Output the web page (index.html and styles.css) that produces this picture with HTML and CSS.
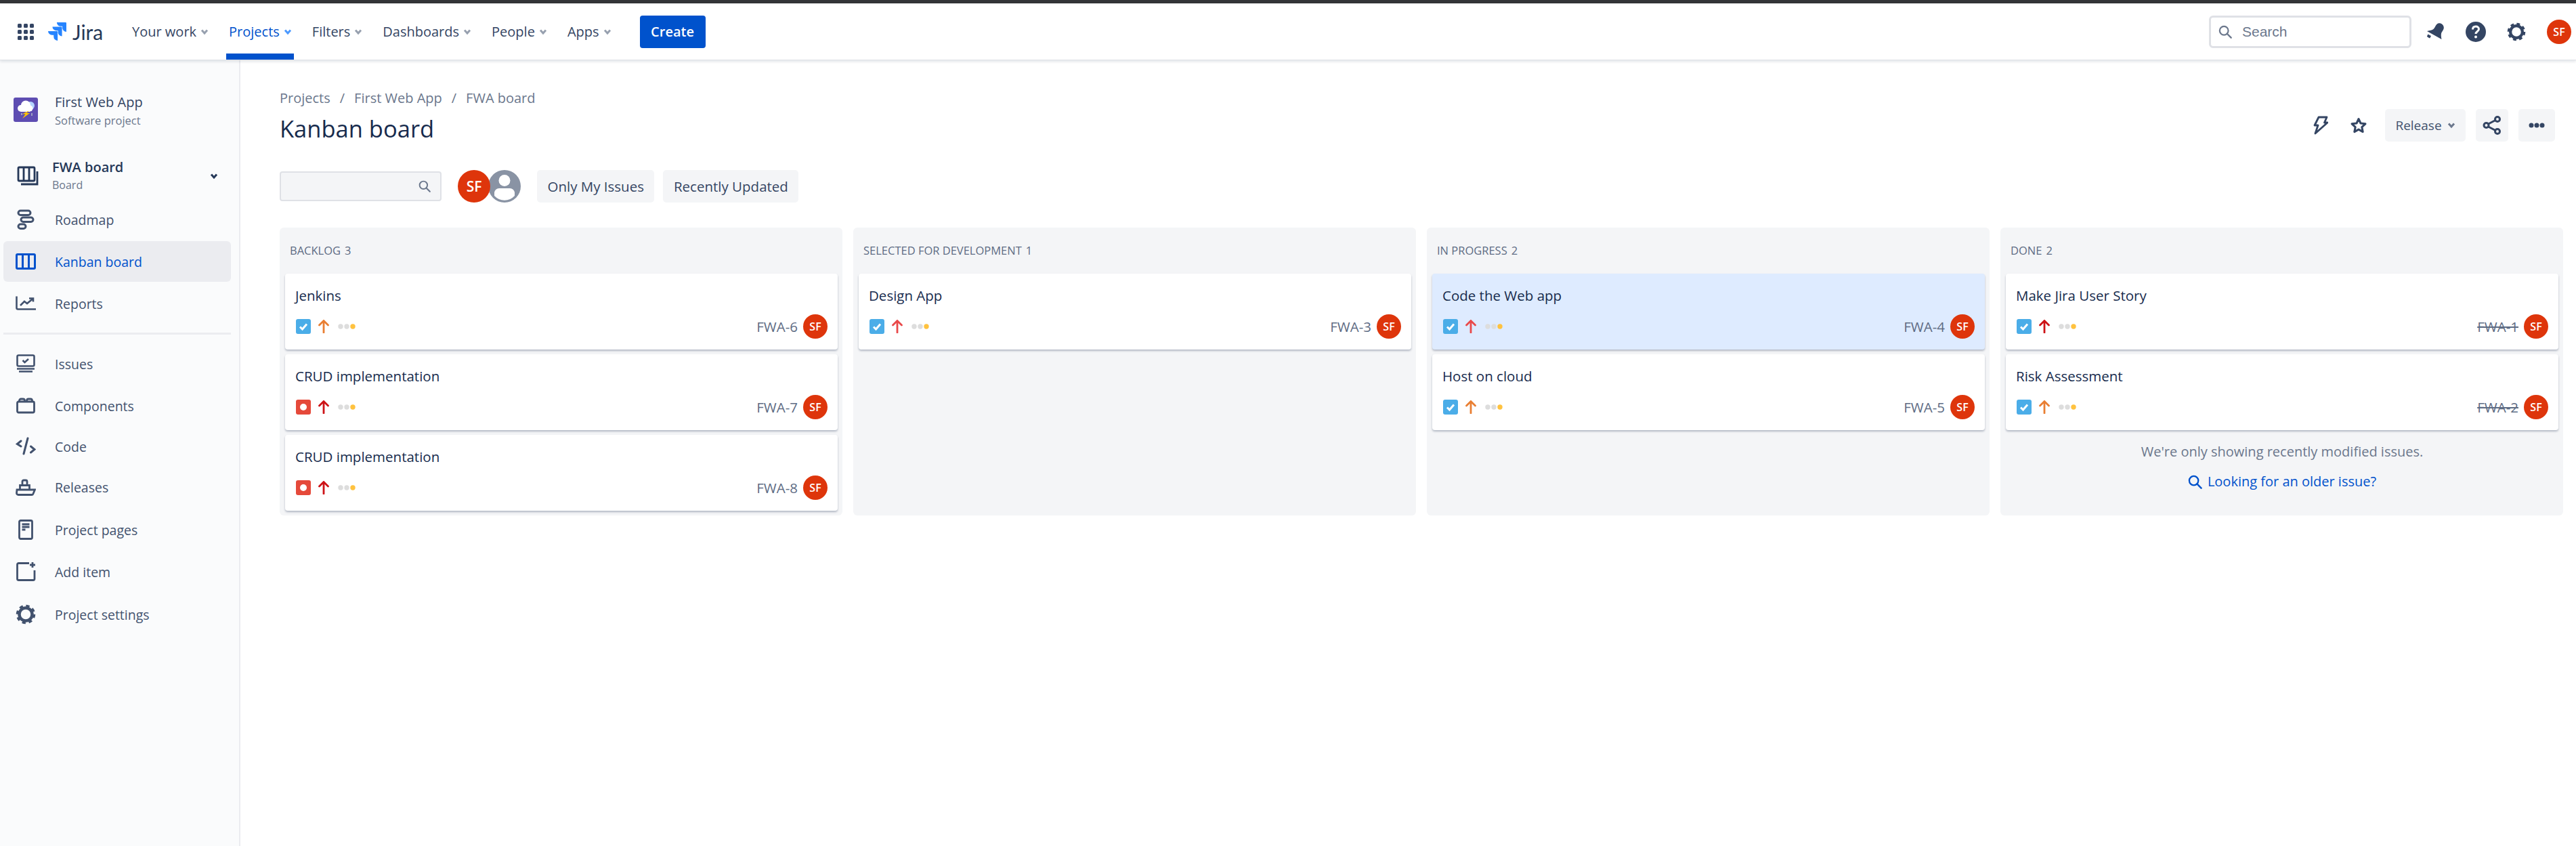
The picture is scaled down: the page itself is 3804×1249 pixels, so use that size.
FILE: index.html
```html
<!DOCTYPE html>
<html lang="en">
<head>
    <meta charset="UTF-8">
    <title>Kanban board - Jira</title>
    <link rel="stylesheet" href="styles.css">
</head>
<body>
    <!-- shared icons -->
    <svg class="defs" width="0" height="0">
        <symbol id="chev" viewBox="0 0 12 12"><path d="M2 3.500 6 8l4-4.500" fill="none" stroke="currentColor" stroke-width="3"/></symbol>
        <symbol id="task" viewBox="0 0 22 22"><rect width="22" height="22" rx="3" fill="#4bade8"/><path d="M6 11.500l3.500 3.500L16 7.500" fill="none" stroke="#fff" stroke-width="3"/></symbol>
        <symbol id="bug" viewBox="0 0 22 22"><rect width="22" height="22" rx="3" fill="#e5493a"/><circle cx="11" cy="11" r="5" fill="#fff"/></symbol>
        <symbol id="arrow" viewBox="0 0 16 20"><path d="M8 19V2M1.500 8 8 1.500 14.500 8" fill="none" stroke="currentColor" stroke-width="2.800" stroke-linecap="round"/></symbol>
        <symbol id="dots" viewBox="0 0 26 8"><circle cx="4" cy="4" r="3.700" fill="#ddd"/><circle cx="13" cy="4" r="3.700" fill="#ddd"/><circle cx="22" cy="4" r="3.700" fill="#ffc23f"/></symbol>
        <symbol id="gear" viewBox="0 0 30 30"><circle cx="15" cy="15" r="9.500" fill="none" stroke="currentColor" stroke-width="4.500"/><circle cx="15" cy="15" r="12.500" fill="none" stroke="currentColor" stroke-width="3.500" stroke-dasharray="5.200 4.620"/></symbol>
        <symbol id="lens" viewBox="0 0 22 22"><circle cx="9" cy="9" r="7" fill="none" stroke="currentColor" stroke-width="2.400"/><path d="M14 14l6.500 6.500" stroke="currentColor" stroke-width="2.600" stroke-linecap="round"/></symbol>
    </svg>

    <div class="topstrip"></div>

    <header class="topnav">
        <svg class="apps" width="24" height="24" viewBox="0 0 24 24" fill="#344563">
            <rect width="6" height="6" rx="1.500"/><rect x="9" width="6" height="6" rx="1.500"/><rect x="18" width="6" height="6" rx="1.500"/>
            <rect y="9" width="6" height="6" rx="1.500"/><rect x="9" y="9" width="6" height="6" rx="1.500"/><rect x="18" y="9" width="6" height="6" rx="1.500"/>
            <rect y="18" width="6" height="6" rx="1.500"/><rect x="9" y="18" width="6" height="6" rx="1.500"/><rect x="18" y="18" width="6" height="6" rx="1.500"/>
        </svg>
        <svg class="logo" width="27" height="27" viewBox="0 0 24 24" fill="#2684ff"><path d="M11.571 11.513H0a5.218 5.218 0 0 0 5.232 5.215h2.13v2.057A5.215 5.215 0 0 0 12.575 24V12.518a1.005 1.005 0 0 0-1.005-1.005zm5.723-5.756H5.736a5.215 5.215 0 0 0 5.215 5.214h2.129v2.058a5.218 5.218 0 0 0 5.215 5.214V6.758a1.001 1.001 0 0 0-1.001-1.001zM23.013 0H11.455a5.215 5.215 0 0 0 5.215 5.215h2.129v2.057A5.215 5.215 0 0 0 24 12.483V1.005A1.001 1.001 0 0 0 23.013 0Z"/></svg>
        <span class="brand">Jira</span>
        <nav class="menu">
            <a class="menu-item">Your work <svg width="12" height="12"><use href="#chev"/></svg></a>
            <a class="menu-item active">Projects <svg width="12" height="12"><use href="#chev"/></svg></a>
            <a class="menu-item">Filters <svg width="12" height="12"><use href="#chev"/></svg></a>
            <a class="menu-item">Dashboards <svg width="12" height="12"><use href="#chev"/></svg></a>
            <a class="menu-item">People <svg width="12" height="12"><use href="#chev"/></svg></a>
            <a class="menu-item">Apps <svg width="12" height="12"><use href="#chev"/></svg></a>
        </nav>
        <button class="create">Create</button>
        <div class="search">
            <svg width="20" height="20"><use href="#lens"/></svg>
            <span>Search</span>
        </div>
        <svg class="tool bell" width="28" height="28" viewBox="0 0 28 28" fill="#344563"><path d="M18.500 1.500c4-1 8 2 8.300 6 .2 3-1.800 4.800-3 7-1.200 2-1.300 5-.3 10.500L2 13c4-1 7.500-1 9.800-3.200C14 7.700 15 2.400 18.500 1.500z"/><path d="M3.500 17.500l4.500 2.600-1.800 3.300c-1.500-.3-3.600-1.500-4.300-2.800z"/></svg>
        <svg class="tool" width="30" height="30" viewBox="0 0 30 30"><circle cx="15" cy="15" r="15" fill="#344563"/><path d="M10.500 11.500c0-3 2-4.500 4.500-4.500s4.500 1.500 4.500 4c0 3.500-4.500 3.500-4.500 7" fill="none" stroke="#fff" stroke-width="3"/><circle cx="15" cy="22.500" r="2" fill="#fff"/></svg>
        <svg class="tool gear" width="28" height="28"><use href="#gear"/></svg>
        <span class="avatar nav-avatar">SF</span>
    </header>

    <div class="layout">
        <aside class="sidebar">
            <div class="project">
                <svg width="36" height="36" viewBox="0 0 36 36"><rect width="36" height="36" rx="3" fill="#5e4db2"/><circle cx="25" cy="12" r="6" fill="#b3d4ff"/><g fill="#fff"><circle cx="11" cy="16" r="5"/><circle cx="18" cy="11.500" r="7"/><circle cx="24" cy="16" r="4.500"/><rect x="11" y="15" width="13" height="6"/></g><path d="M21 20l-8 4.500h4.500L13 31l11-8h-5l3.500-3z" fill="#ffc400"/><path d="M12 23v3M27 23v4" stroke="#b3bac5" stroke-width="1.500"/></svg>
                <div>
                    <div class="project-name">First Web App</div>
                    <div class="project-type">Software project</div>
                </div>
            </div>
            <div class="board-pick">
                <svg width="32" height="30" viewBox="0 0 32 30" fill="none" stroke="#253858" stroke-width="2.800"><rect x="2" y="2" width="24" height="20" rx="1.500"/><path d="M10 2v20M18 2v20M6 27h24V8"/></svg>
                <div class="board-text">
                    <div class="board-name">FWA board</div>
                    <div class="board-type">Board</div>
                </div>
                <svg class="board-chev" width="12" height="12"><use href="#chev"/></svg>
            </div>
            <a class="side-item">
                <svg width="30" height="30" viewBox="0 0 30 30" fill="none" stroke="currentColor" stroke-width="3"><rect x="4" y="2" width="18" height="6.500" rx="3.250"/><rect x="8" y="12" width="18" height="6.500" rx="3.250"/><rect x="4" y="22" width="11" height="6.500" rx="3.250"/></svg>
                Roadmap
            </a>
            <a class="side-item current">
                <svg width="30" height="30" viewBox="0 0 30 30" fill="none" stroke="currentColor" stroke-width="3"><rect x="1.500" y="4.500" width="27" height="21" rx="1.500"/><path d="M10.500 4.500v21M19.500 4.500v21"/></svg>
                Kanban board
            </a>
            <a class="side-item">
                <svg width="30" height="30" viewBox="0 0 30 30" fill="none" stroke="currentColor" stroke-width="2.600"><path d="M1.500 4.500v17a2 2 0 0 0 2 2H30"/><path d="M7 18l6-6 4 3 8-6.500M20 7.500h6v5"/></svg>
                Reports
            </a>
            <div class="side-rule"></div>
            <a class="side-item">
                <svg width="30" height="30" viewBox="0 0 30 30" fill="none" stroke="currentColor" stroke-width="2.600"><rect x="2.500" y="2.500" width="25" height="16" rx="2"/><path d="M10.500 10l3 3 5.500-5"/><path d="M2 22.500h26M5 26.500h20"/></svg>
                Issues
            </a>
            <a class="side-item">
                <svg width="30" height="30" viewBox="0 0 30 30" fill="none" stroke="currentColor" stroke-width="2.800"><rect x="2.500" y="9" width="25" height="16" rx="2"/><path d="M5.500 9V7.500a2.500 2.500 0 0 1 2.500-2.500h3a2.500 2.500 0 0 1 2.500 2.500V9M16.500 9V7.500A2.500 2.500 0 0 1 19 5h3a2.500 2.500 0 0 1 2.500 2.500V9"/></svg>
                Components
            </a>
            <a class="side-item close">
                <svg width="30" height="30" viewBox="0 0 30 30" fill="none" stroke="currentColor" stroke-width="3" stroke-linecap="round"><path d="M8 7l-5.500 4.500L8 15M12 26l6-23M22.500 15l5.500 4.500-5.500 4.500"/></svg>
                Code
            </a>
            <a class="side-item close">
                <svg width="30" height="30" viewBox="0 0 30 30" fill="none" stroke="currentColor" stroke-width="2.800"><path d="M2 19h26.500l-2.500 6a2 2 0 0 1-2 1.500H4a2.500 2.500 0 0 1-2.500-2.500z"/><path d="M6.500 18v-5.500h14V18M10 12V7a2 2 0 0 1 2-2h3a2 2 0 0 1 2 2v5"/></svg>
                Releases
            </a>
            <a class="side-item spaced">
                <svg width="30" height="30" viewBox="0 0 30 30" fill="none" stroke="currentColor" stroke-width="2.800"><rect x="5.500" y="1.500" width="19" height="27" rx="2"/><path d="M9.500 7h11M9.500 11h11M9.500 15h5"/></svg>
                Project pages
            </a>
            <a class="side-item">
                <svg width="30" height="30" viewBox="0 0 30 30" fill="none" stroke="currentColor" stroke-width="2.800"><path d="M20 2.500H4.500a2 2 0 0 0-2 2v21a2 2 0 0 0 2 2H26a2 2 0 0 0 2-2V13"/><path d="M25 1v8M21 5h8"/></svg>
                Add item
            </a>
            <a class="side-item spaced">
                <svg width="30" height="30"><use href="#gear"/></svg>
                Project settings
            </a>
        </aside>

        <main class="content">
            <div class="page-head">
                <div>
                    <div class="crumbs"><span>Projects</span><i>/</i><span>First Web App</span><i>/</i><span>FWA board</span></div>
                    <h1>Kanban board</h1>
                </div>
                <div class="actions">
                    <svg class="act-icon" width="22" height="28" viewBox="0 0 22 28" fill="none" stroke="#344563" stroke-width="2.800" stroke-linejoin="round"><path d="M8 2h12l-3.500 8H21L3 26l4-12H2z"/></svg>
                    <svg class="act-icon star" width="26" height="24" viewBox="0 0 26 24" fill="none" stroke="#344563" stroke-width="3" stroke-linejoin="round"><path d="M13 2.500l3 6.500 7 .8-5.200 4.800 1.400 7L13 18.100l-6.200 3.500 1.400-7L3 9.800l7-.8z"/></svg>
                    <button class="act-btn release">Release <svg width="12" height="12"><use href="#chev"/></svg></button>
                    <button class="act-btn share">
                        <svg width="28" height="30" viewBox="0 0 28 30" fill="none" stroke="#344563" stroke-width="3"><circle cx="22" cy="6" r="3.500"/><circle cx="22" cy="24" r="3.500"/><circle cx="5.500" cy="15" r="3.500"/><path d="M8.500 13l10.500-5.500M8.500 17L19 22.500"/></svg>
                    </button>
                    <button class="act-btn more">
                        <svg width="24" height="8" viewBox="0 0 24 8" fill="#344563"><circle cx="4" cy="4" r="3.500"/><circle cx="12" cy="4" r="3.500"/><circle cx="20" cy="4" r="3.500"/></svg>
                    </button>
                </div>
            </div>

            <div class="toolbar">
                <div class="filter">
                    <svg width="18" height="18"><use href="#lens"/></svg>
                </div>
                <div class="people">
                    <span class="avatar big">SF</span>
                    <svg class="ghost" width="48" height="48" viewBox="0 0 48 48"><circle cx="24" cy="24" r="24" fill="#8993a4"/><circle cx="24" cy="15.500" r="8.500" fill="#fff"/><path d="M9 33a7 7 0 0 1 7-6h16a7 7 0 0 1 7 6v5a20 20 0 0 1-30 0z" fill="#fff"/></svg>
                </div>
                <button class="quick">Only My Issues</button>
                <button class="quick">Recently Updated</button>
            </div>

            <section class="board">
                <div class="column">
                    <h2>BACKLOG <b>3</b></h2>
                    <article class="card">
                        <p class="summary">Jenkins</p>
                        <div class="card-foot">
                            <svg width="22" height="22"><use href="#task"/></svg>
                            <svg class="prio orange" width="16" height="20"><use href="#arrow"/></svg>
                            <svg width="26" height="8"><use href="#dots"/></svg>
                            <span class="key">FWA-6</span><span class="avatar">SF</span>
                        </div>
                    </article>
                    <article class="card">
                        <p class="summary">CRUD implementation</p>
                        <div class="card-foot">
                            <svg width="22" height="22"><use href="#bug"/></svg>
                            <svg class="prio dark" width="16" height="20"><use href="#arrow"/></svg>
                            <svg width="26" height="8"><use href="#dots"/></svg>
                            <span class="key">FWA-7</span><span class="avatar">SF</span>
                        </div>
                    </article>
                    <article class="card">
                        <p class="summary">CRUD implementation</p>
                        <div class="card-foot">
                            <svg width="22" height="22"><use href="#bug"/></svg>
                            <svg class="prio dark" width="16" height="20"><use href="#arrow"/></svg>
                            <svg width="26" height="8"><use href="#dots"/></svg>
                            <span class="key">FWA-8</span><span class="avatar">SF</span>
                        </div>
                    </article>
                </div>

                <div class="column">
                    <h2>SELECTED FOR DEVELOPMENT <b>1</b></h2>
                    <article class="card">
                        <p class="summary">Design App</p>
                        <div class="card-foot">
                            <svg width="22" height="22"><use href="#task"/></svg>
                            <svg class="prio red" width="16" height="20"><use href="#arrow"/></svg>
                            <svg width="26" height="8"><use href="#dots"/></svg>
                            <span class="key">FWA-3</span><span class="avatar">SF</span>
                        </div>
                    </article>
                </div>

                <div class="column">
                    <h2>IN PROGRESS <b>2</b></h2>
                    <article class="card picked">
                        <p class="summary">Code the Web app</p>
                        <div class="card-foot">
                            <svg width="22" height="22"><use href="#task"/></svg>
                            <svg class="prio red" width="16" height="20"><use href="#arrow"/></svg>
                            <svg width="26" height="8"><use href="#dots"/></svg>
                            <span class="key">FWA-4</span><span class="avatar">SF</span>
                        </div>
                    </article>
                    <article class="card">
                        <p class="summary">Host on cloud</p>
                        <div class="card-foot">
                            <svg width="22" height="22"><use href="#task"/></svg>
                            <svg class="prio orange" width="16" height="20"><use href="#arrow"/></svg>
                            <svg width="26" height="8"><use href="#dots"/></svg>
                            <span class="key">FWA-5</span><span class="avatar">SF</span>
                        </div>
                    </article>
                </div>

                <div class="column">
                    <h2>DONE <b>2</b></h2>
                    <article class="card">
                        <p class="summary">Make Jira User Story</p>
                        <div class="card-foot">
                            <svg width="22" height="22"><use href="#task"/></svg>
                            <svg class="prio dark" width="16" height="20"><use href="#arrow"/></svg>
                            <svg width="26" height="8"><use href="#dots"/></svg>
                            <span class="key closed">FWA-1</span><span class="avatar">SF</span>
                        </div>
                    </article>
                    <article class="card">
                        <p class="summary">Risk Assessment</p>
                        <div class="card-foot">
                            <svg width="22" height="22"><use href="#task"/></svg>
                            <svg class="prio orange" width="16" height="20"><use href="#arrow"/></svg>
                            <svg width="26" height="8"><use href="#dots"/></svg>
                            <span class="key closed">FWA-2</span><span class="avatar">SF</span>
                        </div>
                    </article>
                    <p class="note">We're only showing recently modified issues.</p>
                    <a class="older"><svg width="21" height="21"><use href="#lens"/></svg>Looking for an older issue?</a>
                </div>
            </section>
        </main>
    </div>
</body>
</html>
```

FILE: styles.css
```css
* {
    box-sizing: border-box;
}
body {
    margin: 0;
    background: #fff;
    color: #172b4d;
    font-family: "Open Sans", "Noto Sans", sans-serif;
    font-size: 19.500px;
}
.defs {
    position: absolute;
}
button {
    font-family: inherit;
    border: 0;
}
svg {
    flex: none;
    display: block;
}

/* top bar */
.topstrip {
    height: 5px;
    background: #333538;
}
.topnav {
    height: 84px;
    display: flex;
    align-items: center;
    padding-left: 26px;
    background: #fff;
    box-shadow: 0 2px 4px rgba(9, 30, 66, 0.12);
    border-bottom: 1px solid #dfe1e6;
    position: relative;
}
.logo {
    margin-left: 21px;
}
.brand {
    margin-left: 9px;
    width: 44px;
    font-family: Lato, sans-serif;
    font-size: 30px;
    color: #253858;
}
.menu {
    display: flex;
    align-self: stretch;
    margin-left: 40px;
    gap: 23px;
}
.menu-item {
    display: flex;
    align-items: center;
    gap: 6px;
    padding: 0 3px 0 4px;
    color: #344563;
    font-size: 20px;
    border-bottom: 9px solid transparent;
    padding-top: 9px;
}
.menu-item svg {
    color: #97a0af;
}
.menu-item.active {
    color: #0052cc;
    border-bottom-color: #0052cc;
}
.menu-item.active svg {
    color: #4c9aff;
}
.create {
    margin-left: 39px;
    width: 97px;
    height: 48px;
    border-radius: 4px;
    background: #0052cc;
    color: #fff;
    font-size: 20px;
    font-weight: 600;
}
.search {
    margin-left: auto;
    width: 299px;
    height: 48px;
    display: flex;
    align-items: center;
    gap: 15px;
    padding-left: 11px;
    border: 3px solid #dfe1e6;
    border-radius: 6px;
    color: #6b778c;
    font-family: "Liberation Sans", sans-serif;
    font-size: 21px;
}
.tool {
    margin-left: 31px;
}
.tool.bell {
    margin-left: 21px;
}
.tool.gear {
    color: #344563;
}
.nav-avatar {
    margin-left: 31px;
    margin-right: 7px;
}

/* avatars */
.avatar {
    width: 36px;
    height: 36px;
    flex: none;
    border-radius: 50%;
    background: #de350b;
    color: #fff;
    display: flex;
    align-items: center;
    justify-content: center;
    font-size: 16px;
    font-weight: 600;
}
.avatar.big {
    width: 48px;
    height: 48px;
    font-size: 21px;
    position: relative;
    z-index: 1;
}

/* sidebar */
.layout {
    display: flex;
    min-height: 1160px;
}
.sidebar {
    width: 355px;
    flex: none;
    padding-top: 48px;
    background: #fafbfc;
    border-right: 2px solid #ebecf0;
    color: #42526e;
}
.project {
    display: flex;
    align-items: center;
    gap: 25px;
    padding-left: 20px;
}
.project svg {
    margin-top: -4px;
}
.project-name {
    line-height: 27px;
    font-size: 20px;
    font-weight: 500;
    color: #344563;
}
.project-type {
    line-height: 27px;
    font-size: 16.500px;
    color: #6b778c;
}
.board-pick {
    display: flex;
    align-items: center;
    margin-top: 43px;
    padding-left: 25px;
    height: 52px;
}
.board-text {
    margin-left: 20px;
}
.board-name {
    line-height: 26px;
    font-size: 20px;
    font-weight: 600;
    color: #253858;
}
.board-type {
    line-height: 26px;
    font-size: 16px;
    color: #6b778c;
}
.board-chev {
    margin-left: auto;
    margin-right: 31px;
    color: #253858;
}
.side-item {
    display: flex;
    align-items: center;
    gap: 28px;
    height: 60px;
    margin: 2px 12px 0 5px;
    padding-left: 18px;
    border-radius: 6px;
}
.side-item.close {
    margin-top: 0;
}
.side-item.spaced {
    margin-top: 3px;
}
.board-pick + .side-item {
    margin-top: 8px;
}
.side-item.current {
    background: #ebecf0;
    color: #0052cc;
}
.side-rule {
    height: 3px;
    margin: 13px 12px 13px 5px;
    background: #ebecf0;
}
.side-rule + .side-item {
    margin-top: 0;
}

/* page heading */
.content {
    flex: 1;
    padding: 42px 19px 0 58px;
}
.page-head {
    display: flex;
    justify-content: space-between;
    align-items: flex-end;
}
.crumbs {
    display: flex;
    gap: 14px;
    line-height: 28px;
    color: #6b778c;
    font-size: 20px;
}
.crumbs i {
    font-style: normal;
}
h1 {
    margin: 7px 0 0;
    line-height: 48px;
    font-size: 34.500px;
    font-weight: 500;
    color: #172b4d;
}
.actions {
    display: flex;
    align-items: center;
    margin: 0 12px 5px 0;
}
.act-icon.star {
    margin-left: 32px;
}
.act-btn {
    height: 48px;
    display: flex;
    align-items: center;
    justify-content: center;
    background: #f4f5f7;
    border-radius: 5px;
    color: #42526e;
    font-size: 19px;
}
.release {
    width: 119px;
    gap: 8px;
    margin-left: 26px;
}
.release svg {
    color: #6b778c;
}
.share {
    width: 48px;
    margin-left: 15px;
}
.more {
    width: 54px;
    margin-left: 15px;
}

/* filters */
.toolbar {
    display: flex;
    align-items: center;
    margin-top: 37px;
    height: 48px;
}
.filter {
    width: 239px;
    height: 44px;
    display: flex;
    align-items: center;
    justify-content: flex-end;
    padding-right: 14px;
    background: #f4f5f7;
    border: 2px solid #dfe1e6;
    border-radius: 4px;
    color: #6b778c;
}
.people {
    display: flex;
    margin-left: 24px;
}
.ghost {
    margin-left: -3px;
}
.quick {
    height: 48px;
    margin-left: 24px;
    padding: 0 15.500px;
    background: #f4f5f7;
    border-radius: 5px;
    color: #344563;
    font-size: 20.500px;
}
.quick + .quick {
    margin-left: 13px;
}

/* columns */
.board {
    display: grid;
    grid-template-columns: repeat(4, 1fr);
    gap: 16px;
    margin-top: 37px;
}
.column {
    padding: 0 7px 7px 8px;
    background: #f4f5f7;
    border-radius: 6px;
}
h2 {
    margin: 0 0 0 7px;
    height: 66px;
    padding-bottom: 0;
    margin-bottom: 2px;
    display: flex;
    align-items: center;
    gap: 6px;
    font-size: 16.500px;
    font-weight: 400;
    color: #5e6c84;
}
h2 b {
    font-weight: 400;
}
.card {
    height: 112px;
    padding: 18px 15px 0;
    background: #fff;
    border-radius: 4px;
    box-shadow: 0 2px 3px rgba(9, 30, 66, 0.28);
}
.card + .card {
    margin-top: 7px;
}
.card.picked {
    background: #deebff;
}
.summary {
    margin: 0;
    line-height: 28px;
    font-size: 20.500px;
    color: #172b4d;
}
.card-foot {
    display: flex;
    align-items: center;
    margin-top: 14px;
    padding-left: 1px;
}
.prio {
    margin: 0 13px 0 11px;
}
.orange {
    color: #e97f33;
}
.dark {
    color: #cd1317;
}
.red {
    color: #e9494a;
}
.key {
    margin-left: auto;
    margin-right: 8px;
    color: #5e6c84;
    font-size: 20.500px;
}
.key.closed {
    text-decoration: line-through;
}
.note {
    margin: 18px 0 0;
    text-align: center;
    line-height: 28px;
    font-size: 20px;
    color: #6b778c;
}
.older {
    display: flex;
    justify-content: center;
    align-items: center;
    gap: 8px;
    margin-top: 16px;
    line-height: 28px;
    font-size: 20px;
    color: #0052cc;
}
```
